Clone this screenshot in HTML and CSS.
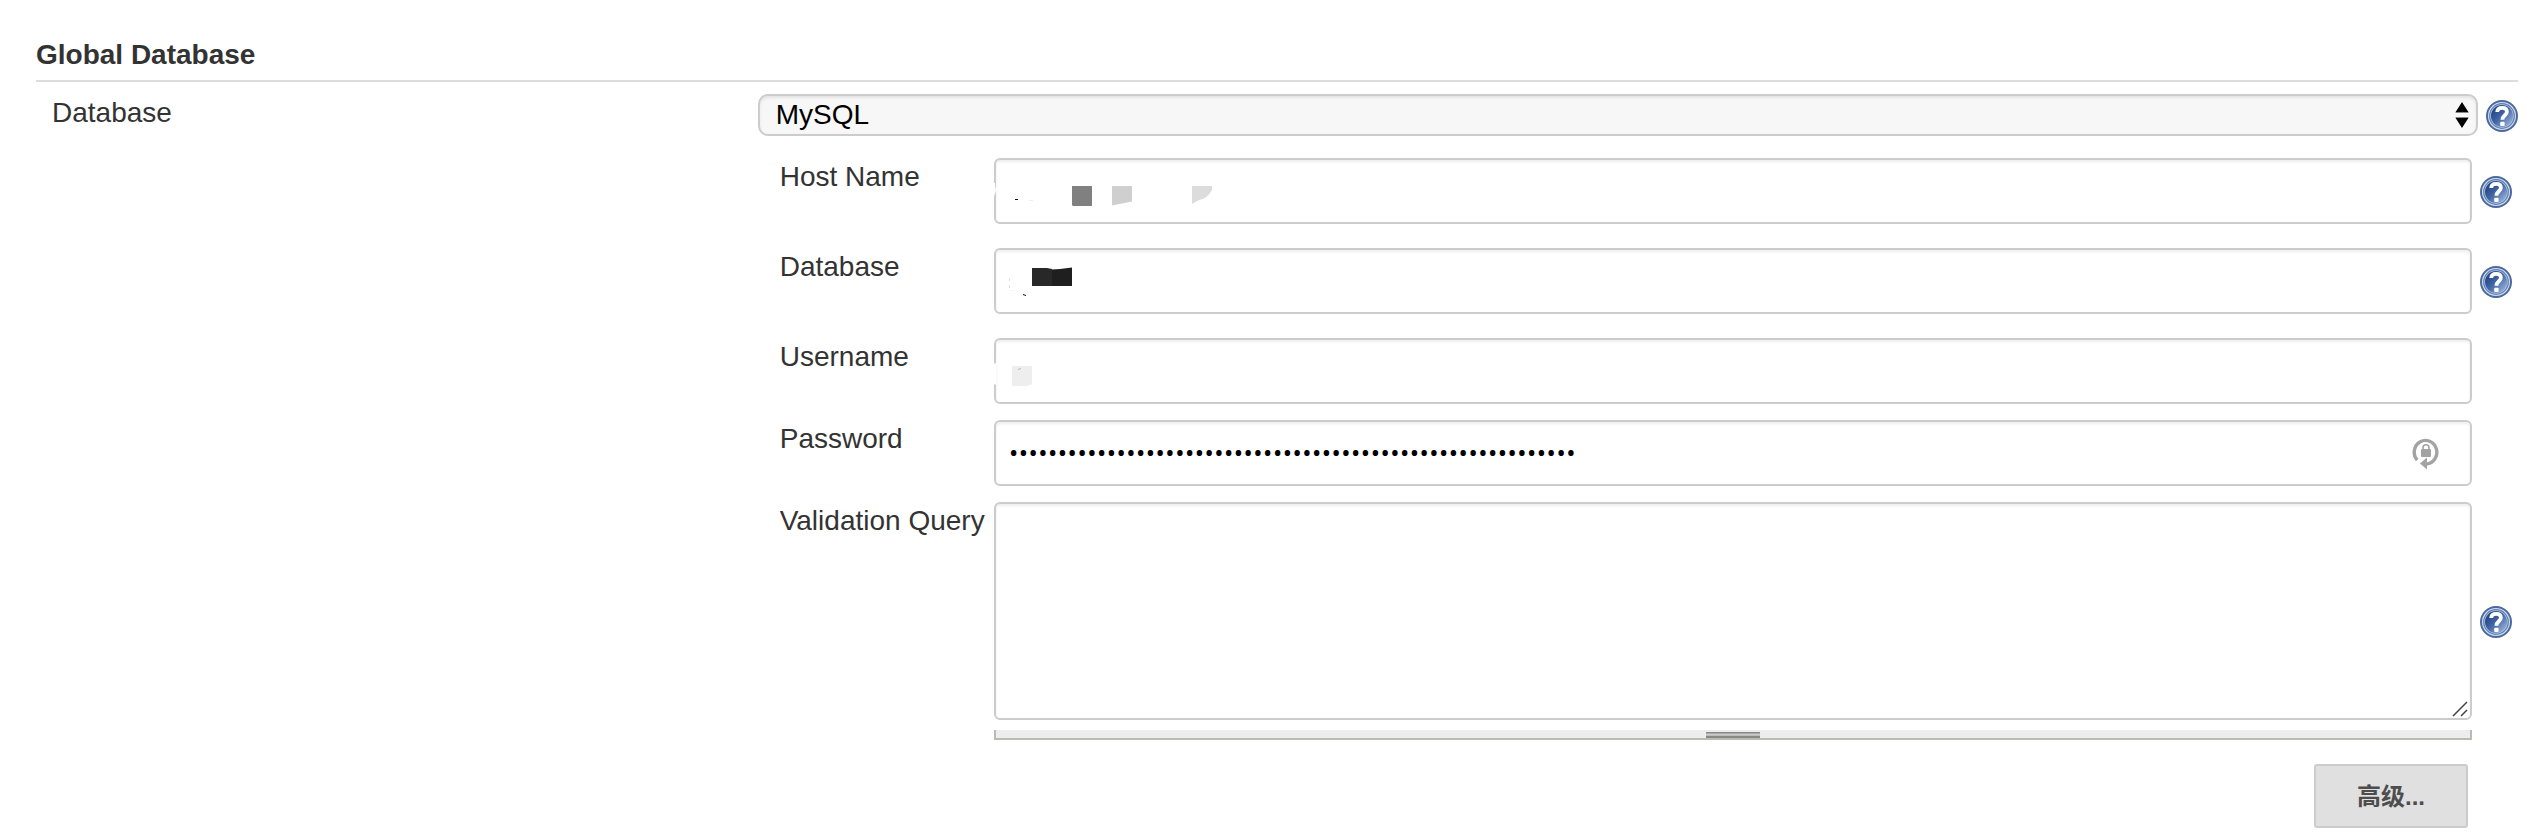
FILE: index.html
```
<!DOCTYPE html>
<html lang="zh-CN">
<head>
<meta charset="utf-8">
<title>Global Database</title>
<link rel="stylesheet" href="styles.css">
</head>
<body>
<svg class="defs" width="0" height="0" aria-hidden="true">
  <defs>
    <linearGradient id="help-fill" x1="0" y1="0" x2="1" y2="1">
      <stop offset="0.2" stop-color="#264a8a"/>
      <stop offset="0.5" stop-color="#4468a6"/>
      <stop offset="0.95" stop-color="#a3bbe0"/>
    </linearGradient>
    <symbol id="help" viewBox="0 0 32 32">
      <circle cx="16" cy="16" r="15" fill="#d3dced" stroke="#4a6a9f" stroke-width="2"/>
      <circle cx="16" cy="16" r="12.300" fill="#b9c8e2" stroke="#5f7fb4" stroke-width="1.200"/>
      <circle cx="16" cy="16" r="11" fill="url(#help-fill)"/>
      <path d="M11.200 12C11.400 8.600 13.400 7.800 16.200 7.800C19 7.800 20.900 9.200 20.900 11.800C20.900 15.300 16.400 15.300 16.400 19.800" fill="none" stroke="#fff" stroke-width="3.800"/>
      <rect x="14.200" y="21.800" width="4.400" height="4.200" rx="1" fill="#fff"/>
    </symbol>
  </defs>
</svg>
<form class="config">
  <h2 class="section-title">Global Database</h2>
  <div class="setting">
    <label class="setting-name" for="kind">Database</label>
    <div class="setting-main">
      <div class="select-row">
        <div class="control">
          <select class="select" id="kind"><option>MySQL</option></select>
          <svg class="arrows" width="14" height="26" viewBox="0 0 14 26" aria-hidden="true">
            <path d="M7 0L13.400 10H.6ZM.6 16H13.400L7 26Z" fill="#000"/>
            <path d="M.5 10.500h13M.5 15.500h13" stroke="#888"/>
          </svg>
        </div>
        <a class="help" href="#kind" aria-label="Help for Database"><svg width="32" height="32"><use href="#help"/></svg></a>
      </div>
      <div class="fields">
        <div class="field spaced">
          <label class="name" for="host">Host Name</label>
          <div class="control">
            <input class="input" id="host" type="text">
            <svg class="mask" width="240" height="66" viewBox="0 0 240 66" aria-hidden="true">
              <path d="M0 25H1V27L2 32L1 36L0 38Z" fill="#fff"/>
              <path d="M21 41.500h3" stroke="#111"/>
              <path d="M35 42.500h4" stroke="#eee"/>
              <path d="M78 28H98V48H79L78 47Z" fill="#808080"/>
              <path d="M118 28H138V43.500L118 47.500Z" fill="#cfcfcf"/>
              <path d="M198 28H218V32Q213 41 205 42L198 46Z" fill="#dcdcdc"/>
            </svg>
          </div>
          <a class="help" href="#host" aria-label="Help for Host Name"><svg width="32" height="32"><use href="#help"/></svg></a>
        </div>
        <div class="field spaced">
          <label class="name" for="schema">Database</label>
          <div class="control">
            <input class="input" id="schema" type="text">
            <svg class="mask" width="240" height="66" viewBox="0 0 240 66" aria-hidden="true">
              <path d="M38 20H53L58 21V38H38Z" fill="#282828"/>
              <path d="M58 21.500L66 21L78 19.500V38H58Z" fill="#1f1f1f"/>
              <path d="M29 46.500L32 47.500" stroke="#111"/>
              <path d="M15.500 30v3M15.500 37v3" stroke="#e0e0e0"/>
              <path d="M16 42.500h5" stroke="#f4f4f4"/>
            </svg>
          </div>
          <a class="help" href="#schema" aria-label="Help for Database name"><svg width="32" height="32"><use href="#help"/></svg></a>
        </div>
        <div class="field">
          <label class="name" for="user">Username</label>
          <div class="control">
            <input class="input" id="user" type="text">
            <svg class="mask" width="240" height="66" viewBox="0 0 240 66" aria-hidden="true">
              <path d="M0 26L2 25V47L0 46Z" fill="#fff"/>
              <path d="M18 28H38V46L33 48H18Z" fill="#eee"/>
              <path d="M24 31.500L27 30.500" stroke="#bbb"/>
            </svg>
          </div>
          <span class="help"></span>
        </div>
        <div class="field">
          <label class="name" for="pass">Password</label>
          <div class="control">
            <input class="input secret" id="pass" type="password" value="0123456789012345678901234567890123456789012345678901234567">
            <svg class="keyring" width="28" height="34" viewBox="0 0 28 34" aria-hidden="true">
              <path d="M5.200 24.200A11.300 11.800 0 1 1 14.500 28" fill="none" stroke="#a3a3a3" stroke-width="3.400"/>
              <path d="M8 27.500L15 21.500V33.500Z" fill="#a3a3a3"/>
              <rect x="9" y="13" width="10" height="8" rx="1" fill="#a3a3a3"/>
              <path d="M11 14V11.500Q11 8.700 14 8.700T17 11.500V14" fill="none" stroke="#a3a3a3" stroke-width="1.600"/>
            </svg>
          </div>
          <span class="help"></span>
        </div>
        <div class="field">
          <label class="name" for="query">Validation Query</label>
          <div class="control">
            <textarea class="input area" id="query"></textarea>
            <svg class="grip" width="16" height="16" viewBox="0 0 16 16" aria-hidden="true">
              <path d="M1 15L15 1M9 15L15 9" stroke="#444" stroke-width="1.500"/>
            </svg>
            <div class="resizer"><span class="resizer-bar"></span></div>
          </div>
          <a class="help" href="#query" aria-label="Help for Validation Query"><svg width="32" height="32"><use href="#help"/></svg></a>
        </div>
        <div class="actions"><button class="button" type="button">高级...</button></div>
      </div>
    </div>
  </div>
</form>
</body>
</html>
```
FILE: styles.css
```
* { box-sizing: border-box; }
body {
  margin: 0;
  background: #fff;
  color: #333;
  font: 28px/32px "Liberation Sans", "Noto Sans CJK SC", sans-serif;
}
.defs { position: absolute; }
.config { padding: 39px 8px 6px 36px; }
.section-title {
  margin: 0;
  padding-bottom: 9px;
  border-bottom: 2px solid #ddd;
  font-size: 28px;
  line-height: 32px;
}
.setting {
  display: grid;
  grid-template-columns: 41fr 100fr;
  padding-top: 12px;
}
.setting-name { padding: 3px 0 0 16px; }
.select-row { display: flex; align-items: center; gap: 8px; }
.control { position: relative; flex: 1; min-width: 0; }
.select {
  display: block;
  width: 100%;
  height: 42px;
  padding: 0 40px 0 16px;
  border: 2px solid #ccc;
  border-radius: 10px;
  background: #f7f7f7;
  box-shadow: inset 0 2px 3px #e4e4e4;
  color: #000;
  font: inherit;
  appearance: none;
}
.arrows { position: absolute; right: 9px; top: 8px; }
.help { display: block; flex: none; width: 32px; padding-top: 2px; }
.help svg { display: block; }
.fields {
  display: flex;
  flex-direction: column;
  gap: 16px;
  padding: 22px 6px 0 22px;
}
.field { display: flex; align-items: center; }
.field .help { margin-left: 8px; }
.spaced { margin-bottom: 8px; }
.name { align-self: flex-start; flex: none; width: 214px; padding-top: 3px; white-space: nowrap; }
.input {
  display: block;
  width: 100%;
  height: 66px;
  padding: 0 14px;
  border: 2px solid #ccc;
  border-radius: 6px;
  background: #fff;
  box-shadow: inset 0 2px 3px #eee;
  color: #000;
  font: inherit;
}
.secret { padding: 0 64px 2px 13px; font-family: "Open Sans", sans-serif; font-size: 26px; }
.area { height: 218px; padding: 12px 14px; resize: none; }
.mask { position: absolute; left: 0; top: 0; pointer-events: none; }
.keyring { position: absolute; right: 32px; top: 16px; }
.grip { position: absolute; right: 4px; top: 199px; pointer-events: none; }
.resizer {
  display: flex;
  justify-content: center;
  height: 10px;
  margin-top: 10px;
  border: solid #bbbbb3;
  border-width: 0 2px 2px;
  background: #ededed;
}
.resizer-bar {
  width: 54px;
  height: 6px;
  margin-top: 2px;
  border: solid #888884;
  border-width: 1px 0 2px;
  background: linear-gradient(#aaa 1px, #ccc 1px, #ccc 2px, #aaa 3px);
}
.actions { display: flex; justify-content: flex-end; padding: 8px 44px 0 0; }
.button {
  height: 64px;
  padding: 2px 41px 0;
  border: 2px solid #ccc;
  border-radius: 3px;
  background: #e0e0e0;
  color: #4d4d4d;
  font: bold 24px/32px "Liberation Sans", "Noto Sans CJK SC", sans-serif;
  white-space: nowrap;
}
```
